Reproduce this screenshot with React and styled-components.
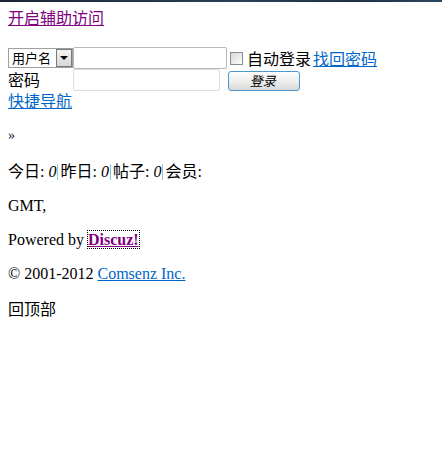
import React from 'react';
import styled, { createGlobalStyle } from 'styled-components';

const GlobalStyle = createGlobalStyle`
  html, body {
    margin: 0;
    padding: 0;
    background: #fff;
  }
  body {
    font-family: "Liberation Serif", "Noto Sans CJK SC", serif;
    font-size: 16px;
    color: #000;
  }
`;

const TopBar = styled.div`
  height: 2px;
  background: linear-gradient(90deg, #1c2434, #22344c 30%, #2a4058 55%, #1e3048 80%, #2c4660);
`;

const Page = styled.div`
  padding: 6px 8px 8px;
`;

const Link = styled.a`
  color: ${({ visited }) => (visited ? '#800080' : '#0066cc')};
  text-decoration: underline;
  cursor: pointer;
  font-family: ${({ cjk }) => (cjk ? '"Noto Sans CJK SC", sans-serif' : 'inherit')};
`;

const Cjk = styled.span`
  font-family: "Noto Sans CJK SC", sans-serif;
`;

const TopLine = styled.div`
  height: 18px;
  line-height: 18px;
  margin-bottom: 21px;
`;

const LoginForm = styled.div`
  display: flex;
  flex-direction: column;
  line-height: 18px;
`;

const FormRow = styled.div`
  display: flex;
  align-items: center;
  height: 22px;
`;

const FakeSelect = styled.div`
  width: 65px;
  height: 20px;
  border: 1px solid #a0a0a0;
  display: flex;
  align-items: stretch;
  box-sizing: border-box;
  font-family: "Noto Sans CJK SC", sans-serif;
  font-size: 13px;
`;

const SelectText = styled.span`
  flex: 1;
  line-height: 18px;
  padding-left: 3px;
`;

const SelectArrow = styled.span`
  width: 16px;
  background: linear-gradient(#f4f4f4, #d8d8d8);
  border: 1px solid #7a7a7a;
  box-sizing: border-box;
  display: flex;
  align-items: center;
  justify-content: center;
  &::after {
    content: '';
    border-left: 4px solid transparent;
    border-right: 4px solid transparent;
    border-top: 4px solid #000;
  }
`;

const TextInput = styled.input`
  box-sizing: border-box;
  width: ${({ w }) => w}px;
  height: 22px;
  border: 1px solid ${({ light }) => (light ? '#d8dce4' : '#b8b8b8')};
  border-radius: 2px;
  padding: 0 3px;
  margin: 0;
  font-size: 13px;
  outline: none;
`;

const Check = styled.span`
  width: 11px;
  height: 11px;
  border: 1px solid #8c8c8c;
  background: linear-gradient(135deg, #d8d8d8, #fcfcfc);
  margin: 0 4px 0 3px;
`;

const Label = styled.span`
  font-family: "Noto Sans CJK SC", sans-serif;
  margin-right: 2px;
`;

const FieldLabel = styled.span`
  width: 65px;
  align-self: flex-start;
  margin-top: 1px;
  line-height: 18px;
  font-family: "Noto Sans CJK SC", sans-serif;
`;

const LoginButton = styled.button`
  box-sizing: border-box;
  width: 72px;
  height: 20px;
  margin: 1px 0 0 8px;
  padding: 0;
  border: 1px solid #4a9ad0;
  border-radius: 3px;
  background: linear-gradient(#ffffff, #ececec 55%, #d8d8d8);
  font-family: "Noto Sans CJK SC", sans-serif;
  font-size: 13px;
  color: #000;
  line-height: 16px;
`;

const Slanted = styled.span`
  display: inline-block;
  transform: skewX(-14deg);
`;

const NavLine = styled.div`
  height: 18px;
  line-height: 18px;
`;

const Para = styled.p`
  margin: 16px 0 0;
  line-height: 18px;
`;

const Crumb = styled.p`
  margin: 18px 0 0;
  line-height: 18px;
  font-size: 14px;
  color: #1a1a3a;
`;

const Num = styled.em`
  font-style: italic;
`;

const Sep = styled.span`
  display: inline-block;
  width: 1px;
  height: 16px;
  background: #8cc4e4;
  vertical-align: -3px;
  margin: 0 2px 0 1px;
`;

const Strong = styled.a`
  color: #800080;
  font-weight: bold;
  text-decoration: underline;
  outline: 1px dotted #000;
`;

const stats = ['今日', '昨日', '帖子'];

export default function App() {
  return (
    <>
      <GlobalStyle />
      <TopBar />
      <Page>
        <TopLine>
          <Link visited cjk>开启辅助访问</Link>
        </TopLine>
        <LoginForm>
          <FormRow>
            <FakeSelect>
              <SelectText>用户名</SelectText>
              <SelectArrow />
            </FakeSelect>
            <TextInput w={154} />
            <Check />
            <Label>自动登录</Label>
            <Link cjk>找回密码</Link>
          </FormRow>
          <FormRow>
            <FieldLabel>密码</FieldLabel>
            <TextInput w={147} light type="password" />
            <LoginButton>
              <Slanted>登录</Slanted>
            </LoginButton>
          </FormRow>
          <NavLine>
            <Link cjk>快捷导航</Link>
          </NavLine>
        </LoginForm>
        <Crumb>»</Crumb>
        <Para>
          {stats.map((s) => (
            <React.Fragment key={s}>
              <Cjk>{s}</Cjk>: <Num>0</Num>
              <Sep />
            </React.Fragment>
          ))}
          <Cjk>会员</Cjk>:
        </Para>
        <Para>GMT,</Para>
        <Para>
          Powered by <Strong>Discuz!</Strong>
        </Para>
        <Para>
          © 2001-2012 <Link>Comsenz Inc.</Link>
        </Para>
        <Para>
          <Cjk>回顶部</Cjk>
        </Para>
      </Page>
    </>
  );
}
